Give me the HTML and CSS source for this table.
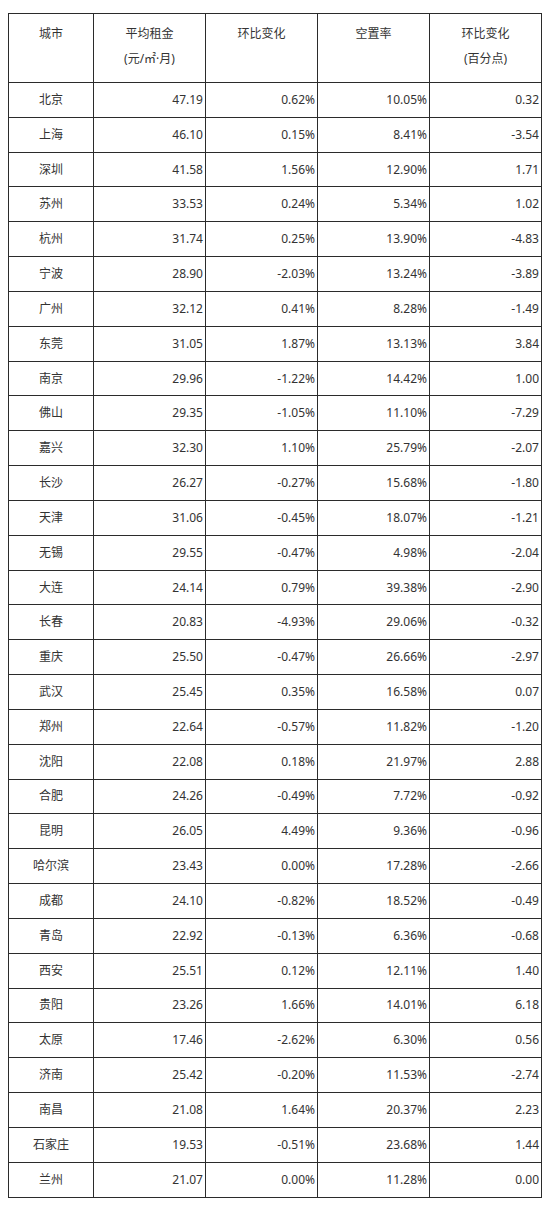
FILE: index.html
```html
<!DOCTYPE html>
<html lang="zh-CN">
<head>
<meta charset="utf-8">
<link rel="stylesheet" href="styles.css">
</head>
<body>
<table class="data">
<colgroup>
<col class="c-city"><col class="c-num"><col class="c-num"><col class="c-num"><col class="c-num">
</colgroup>
<thead>
<tr><th>城市</th><th>平均租金<br>(元/㎡·月)</th><th>环比变化</th><th>空置率</th><th>环比变化<br>(百分点)</th></tr>
</thead>
<tbody>
<tr><td>北京</td><td>47.19</td><td>0.62%</td><td>10.05%</td><td>0.32</td></tr>
<tr><td>上海</td><td>46.10</td><td>0.15%</td><td>8.41%</td><td>-3.54</td></tr>
<tr><td>深圳</td><td>41.58</td><td>1.56%</td><td>12.90%</td><td>1.71</td></tr>
<tr><td>苏州</td><td>33.53</td><td>0.24%</td><td>5.34%</td><td>1.02</td></tr>
<tr><td>杭州</td><td>31.74</td><td>0.25%</td><td>13.90%</td><td>-4.83</td></tr>
<tr><td>宁波</td><td>28.90</td><td>-2.03%</td><td>13.24%</td><td>-3.89</td></tr>
<tr><td>广州</td><td>32.12</td><td>0.41%</td><td>8.28%</td><td>-1.49</td></tr>
<tr><td>东莞</td><td>31.05</td><td>1.87%</td><td>13.13%</td><td>3.84</td></tr>
<tr><td>南京</td><td>29.96</td><td>-1.22%</td><td>14.42%</td><td>1.00</td></tr>
<tr><td>佛山</td><td>29.35</td><td>-1.05%</td><td>11.10%</td><td>-7.29</td></tr>
<tr><td>嘉兴</td><td>32.30</td><td>1.10%</td><td>25.79%</td><td>-2.07</td></tr>
<tr><td>长沙</td><td>26.27</td><td>-0.27%</td><td>15.68%</td><td>-1.80</td></tr>
<tr><td>天津</td><td>31.06</td><td>-0.45%</td><td>18.07%</td><td>-1.21</td></tr>
<tr><td>无锡</td><td>29.55</td><td>-0.47%</td><td>4.98%</td><td>-2.04</td></tr>
<tr><td>大连</td><td>24.14</td><td>0.79%</td><td>39.38%</td><td>-2.90</td></tr>
<tr><td>长春</td><td>20.83</td><td>-4.93%</td><td>29.06%</td><td>-0.32</td></tr>
<tr><td>重庆</td><td>25.50</td><td>-0.47%</td><td>26.66%</td><td>-2.97</td></tr>
<tr><td>武汉</td><td>25.45</td><td>0.35%</td><td>16.58%</td><td>0.07</td></tr>
<tr><td>郑州</td><td>22.64</td><td>-0.57%</td><td>11.82%</td><td>-1.20</td></tr>
<tr><td>沈阳</td><td>22.08</td><td>0.18%</td><td>21.97%</td><td>2.88</td></tr>
<tr><td>合肥</td><td>24.26</td><td>-0.49%</td><td>7.72%</td><td>-0.92</td></tr>
<tr><td>昆明</td><td>26.05</td><td>4.49%</td><td>9.36%</td><td>-0.96</td></tr>
<tr><td>哈尔滨</td><td>23.43</td><td>0.00%</td><td>17.28%</td><td>-2.66</td></tr>
<tr><td>成都</td><td>24.10</td><td>-0.82%</td><td>18.52%</td><td>-0.49</td></tr>
<tr><td>青岛</td><td>22.92</td><td>-0.13%</td><td>6.36%</td><td>-0.68</td></tr>
<tr><td>西安</td><td>25.51</td><td>0.12%</td><td>12.11%</td><td>1.40</td></tr>
<tr><td>贵阳</td><td>23.26</td><td>1.66%</td><td>14.01%</td><td>6.18</td></tr>
<tr><td>太原</td><td>17.46</td><td>-2.62%</td><td>6.30%</td><td>0.56</td></tr>
<tr><td>济南</td><td>25.42</td><td>-0.20%</td><td>11.53%</td><td>-2.74</td></tr>
<tr><td>南昌</td><td>21.08</td><td>1.64%</td><td>20.37%</td><td>2.23</td></tr>
<tr><td>石家庄</td><td>19.53</td><td>-0.51%</td><td>23.68%</td><td>1.44</td></tr>
<tr><td>兰州</td><td>21.07</td><td>0.00%</td><td>11.28%</td><td>0.00</td></tr>
</tbody>
</table>
</body>
</html>
```

FILE: styles.css
```css
html, body {
  background: #ffffff;
}
body {
  margin: 13px 8px 8px 8px;
  font-family: "Noto Sans", "Noto Sans CJK SC", sans-serif;
  font-size: 12px;
  color: #333333;
}
.data {
  border-collapse: collapse;
  table-layout: fixed;
  width: 533px;
}
.c-city { width: 85px; }
.c-num { width: 112px; }
.data th,
.data td {
  border: 1px solid #2b2b2b;
  padding: 0 2px;
}
.data th {
  height: 69px;
  box-sizing: border-box;
  font-weight: normal;
  text-align: center;
  vertical-align: top;
  line-height: 25px;
  padding-top: 7px;
}
.data td {
  height: 34.84px;
  box-sizing: border-box;
  line-height: 16px;
  text-align: right;
  vertical-align: middle;
}
.data td:first-child {
  text-align: center;
}
```
